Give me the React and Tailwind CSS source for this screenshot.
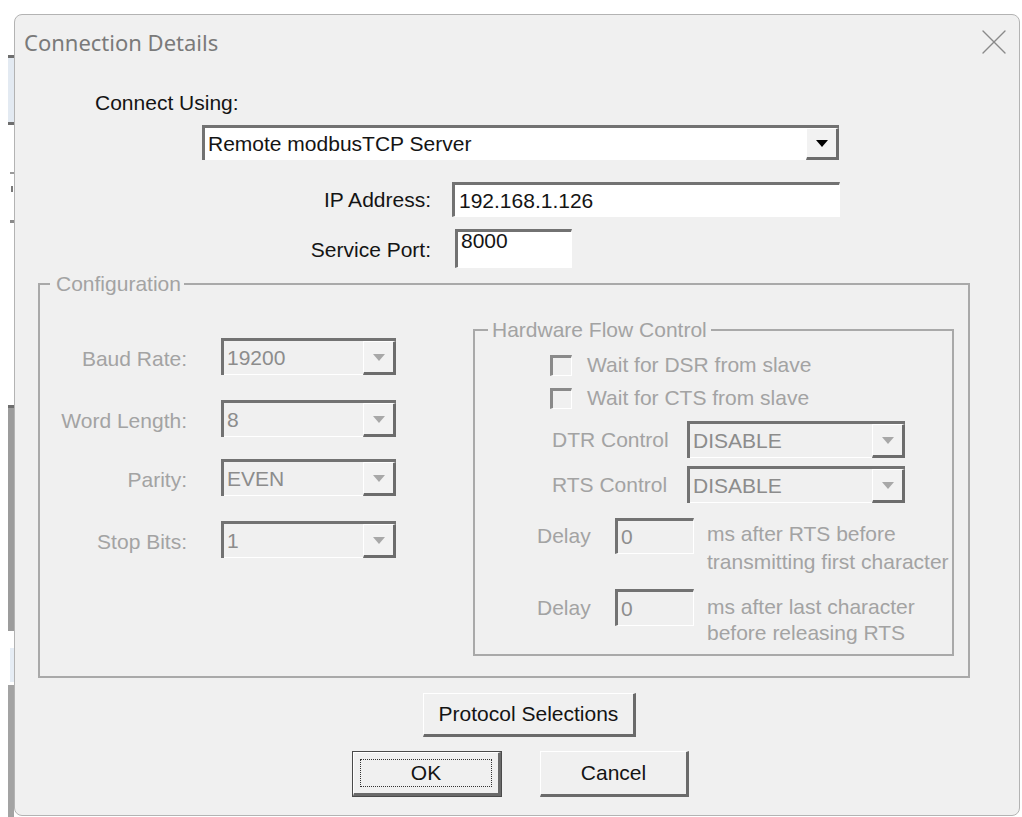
import { X } from 'lucide-react'

const FONT = "font-['Liberation_Sans',Arial,sans-serif]"

// sunken 3D edge used by text boxes, combo boxes and check boxes
const SUNKEN = 'border-t-[3px] border-l-[3px] border-t-[#727272] border-l-[#727272] border-r border-b border-r-white border-b-white'

function Arrow({ disabled }) {
  return (
    <div
      className={`w-0 h-0 border-x-[6px] border-x-transparent border-t-[7px] ${
        disabled ? 'border-t-[#a8a8a8]' : 'border-t-black'
      }`}
    />
  )
}

function Combo({ value, disabled, className = '' }) {
  return (
    <div
      className={`flex border-t-[3px] border-l-[3px] border-[#727272] ${
        disabled ? 'bg-[#f0f0f0] text-[#8c8c8c]' : 'bg-white text-[#141414]'
      } ${className}`}
    >
      <div className="flex-1 flex items-center pl-[3px] border-b border-white whitespace-nowrap overflow-hidden">
        {value}
      </div>
      <div className="w-[33px] flex items-center justify-center bg-[#f2f2f2] border-t border-l border-white border-r-[3px] border-b-[3px] border-r-[#6c6c6c] border-b-[#6c6c6c]">
        <Arrow disabled={disabled} />
      </div>
    </div>
  )
}

function Field({ value, disabled, className = '' }) {
  return (
    <div
      className={`flex pl-[3px] ${SUNKEN} ${
        disabled ? 'bg-[#f0f0f0] text-[#8e8e8e]' : 'bg-white text-[#141414]'
      } ${className}`}
    >
      {value}
    </div>
  )
}

function Check({ label }) {
  return (
    <div className="flex items-center h-[24px] ml-[75px]">
      <div className="w-[22px] h-[21px] border-t-[3px] border-l-[3px] border-t-[#8a8a8a] border-l-[#8a8a8a] border-r border-b border-r-white border-b-white bg-[#f0f0f0]" />
      <span className="ml-[15px] text-[#a3a3a3] whitespace-nowrap">{label}</span>
    </div>
  )
}

function Raised({ children, className = '' }) {
  return (
    <div
      className={`flex items-center justify-center bg-[#f0f0f0] border-t border-l border-white border-r-[3px] border-b-[3px] border-r-[#6a6a6a] border-b-[#6a6a6a] text-[#141414] ${className}`}
    >
      {children}
    </div>
  )
}

const SERIAL = [
  { label: 'Baud Rate:', value: '19200', mt: 'mt-0' },
  { label: 'Word Length:', value: '8', mt: 'mt-[25px]' },
  { label: 'Parity:', value: 'EVEN', mt: 'mt-[22px]' },
  { label: 'Stop Bits:', value: '1', mt: 'mt-[25px]' },
]

// bits of the window that sits behind the dialog
function BackStrip() {
  return (
    <div className="w-[14px] shrink-0 flex flex-col">
      <div className="h-[55px]" />
      <div className="h-[3px] ml-[8px] bg-[#6e6e6e]" />
      <div className="h-[64px] ml-[8px] bg-[#e3eaf2]" />
      <div className="h-[3px] ml-[8px] bg-[#6e6e6e]" />
      <div className="h-[47px]" />
      <div className="h-[2px] ml-[10px] bg-[#9a9a9a]" />
      <div className="h-[12px]" />
      <div className="h-[6px] ml-[11px] w-[2px] bg-[#7a7a7a]" />
      <div className="h-[28px]" />
      <div className="h-[3px] ml-[10px] bg-[#8a8a8a]" />
      <div className="h-[182px]" />
      <div className="h-[3px] ml-[8px] bg-[#6e6e6e]" />
      <div className="h-[223px] ml-[8px] bg-[#9c9c9c]" />
      <div className="h-[17px]" />
      <div className="h-[34px] ml-[10px] bg-[#e6edf5]" />
      <div className="h-[3px]" />
      <div className="flex-1 ml-[8px] bg-[#a3a3a3]" />
    </div>
  )
}

export default function App() {
  return (
    <div className={`w-[1022px] h-[817px] bg-white flex overflow-hidden text-[21px] leading-[24px] ${FONT}`}>
      <BackStrip />

      <div className="mt-[14px] w-[1006px] h-[802px] shrink-0 border border-[#b3b3b3] rounded-[8px] bg-[#f0f0f0] flex flex-col">
        {/* title bar */}
        <div className="h-[54px] flex items-center justify-between pl-[9px] pr-[3px]">
          <span className="font-['Noto_Sans',sans-serif] text-[22px] text-[#7a7a7a]">Connection Details</span>
          <X className="w-[44px] h-[44px] text-[#8a8a8a]" strokeWidth={0.75} />
        </div>

        {/* connection target */}
        <div className="mt-[22px] ml-[80px] text-[#141414]">Connect Using:</div>
        <Combo value="Remote modbusTCP Server" className="mt-[10px] ml-[187px] w-[637px] h-[35px]" />

        <div className="mt-[22px] flex items-center text-[#141414]">
          <div className="w-[416px] text-right">IP Address:</div>
          <Field value="192.168.1.126" className="ml-[21px] w-[388px] h-[35px] items-center pl-[4px]" />
        </div>
        <div className="mt-[12px] flex items-center text-[#141414]">
          <div className="w-[416px] text-right pt-[3px]">Service Port:</div>
          <Field value="8000" className="ml-[24px] w-[117px] h-[39px] items-start leading-[18px]" />
        </div>

        {/* serial settings, greyed out while TCP is selected */}
        <fieldset className="mt-[4px] ml-[23px] w-[932px] border-2 border-[#a9a9a9] pb-[20px]">
          <legend className="ml-[10px] pl-[6px] pr-[3px] text-[#a3a3a3]">Configuration</legend>
          <div className="flex items-start">
            <div className="mt-[42px] flex flex-col">
              {SERIAL.map(row => (
                <div key={row.label} className={`flex items-center h-[37px] ${row.mt}`}>
                  <div className="w-[147px] text-right text-[#a3a3a3] pt-[4px]">{row.label}</div>
                  <Combo value={row.value} disabled className="ml-[34px] w-[175px] h-[37px]" />
                </div>
              ))}
            </div>

            <fieldset className="mt-[22px] ml-[77px] w-[481px] border-2 border-[#a9a9a9] pb-[8px]">
              <legend className="ml-[13px] px-[4px] text-[#a3a3a3]">Hardware Flow Control</legend>
              <div className="mt-[11px]">
                <Check label="Wait for DSR from slave" />
              </div>
              <div className="mt-[9px]">
                <Check label="Wait for CTS from slave" />
              </div>

              <div className="mt-[11px] flex items-center h-[37px]">
                <div className="ml-[77px] w-[135px] text-[#a3a3a3]">DTR Control</div>
                <Combo value="DISABLE" disabled className="w-[218px] h-[37px]" />
              </div>
              <div className="mt-[8px] flex items-center h-[37px]">
                <div className="ml-[77px] w-[135px] text-[#a3a3a3]">RTS Control</div>
                <Combo value="DISABLE" disabled className="w-[218px] h-[37px]" />
              </div>

              <div className="mt-[15px] flex items-start">
                <div className="ml-[62px] w-[78px] h-[36px] flex items-center text-[#a3a3a3]">Delay</div>
                <Field value="0" disabled className="w-[79px] h-[36px] items-center" />
                <div className="ml-[13px] mt-[2px] leading-[28px] text-[#a3a3a3] whitespace-nowrap">
                  <div>ms after RTS before</div>
                  <div>transmitting first character</div>
                </div>
              </div>
              <div className="mt-[13px] flex items-start">
                <div className="ml-[62px] w-[78px] h-[37px] flex items-center text-[#a3a3a3]">Delay</div>
                <Field value="0" disabled className="w-[79px] h-[37px] items-center" />
                <div className="ml-[13px] mt-[5px] leading-[26px] text-[#a3a3a3] whitespace-nowrap">
                  <div>ms after last character</div>
                  <div>before releasing RTS</div>
                </div>
              </div>
            </fieldset>
          </div>
        </fieldset>

        {/* dialog buttons */}
        <Raised className="mt-[15px] ml-[408px] w-[213px] h-[44px]">Protocol Selections</Raised>
        <div className="mt-[14px] ml-[337px] flex">
          <div className="w-[150px] h-[46px] border border-[#4a4a4a] flex">
            <Raised className="flex-1 p-[6px]">
              <div className="w-full h-full border border-dotted border-[#333] flex items-center justify-center">
                OK
              </div>
            </Raised>
          </div>
          <Raised className="ml-[38px] w-[149px] h-[46px]">Cancel</Raised>
        </div>
      </div>
    </div>
  )
}
